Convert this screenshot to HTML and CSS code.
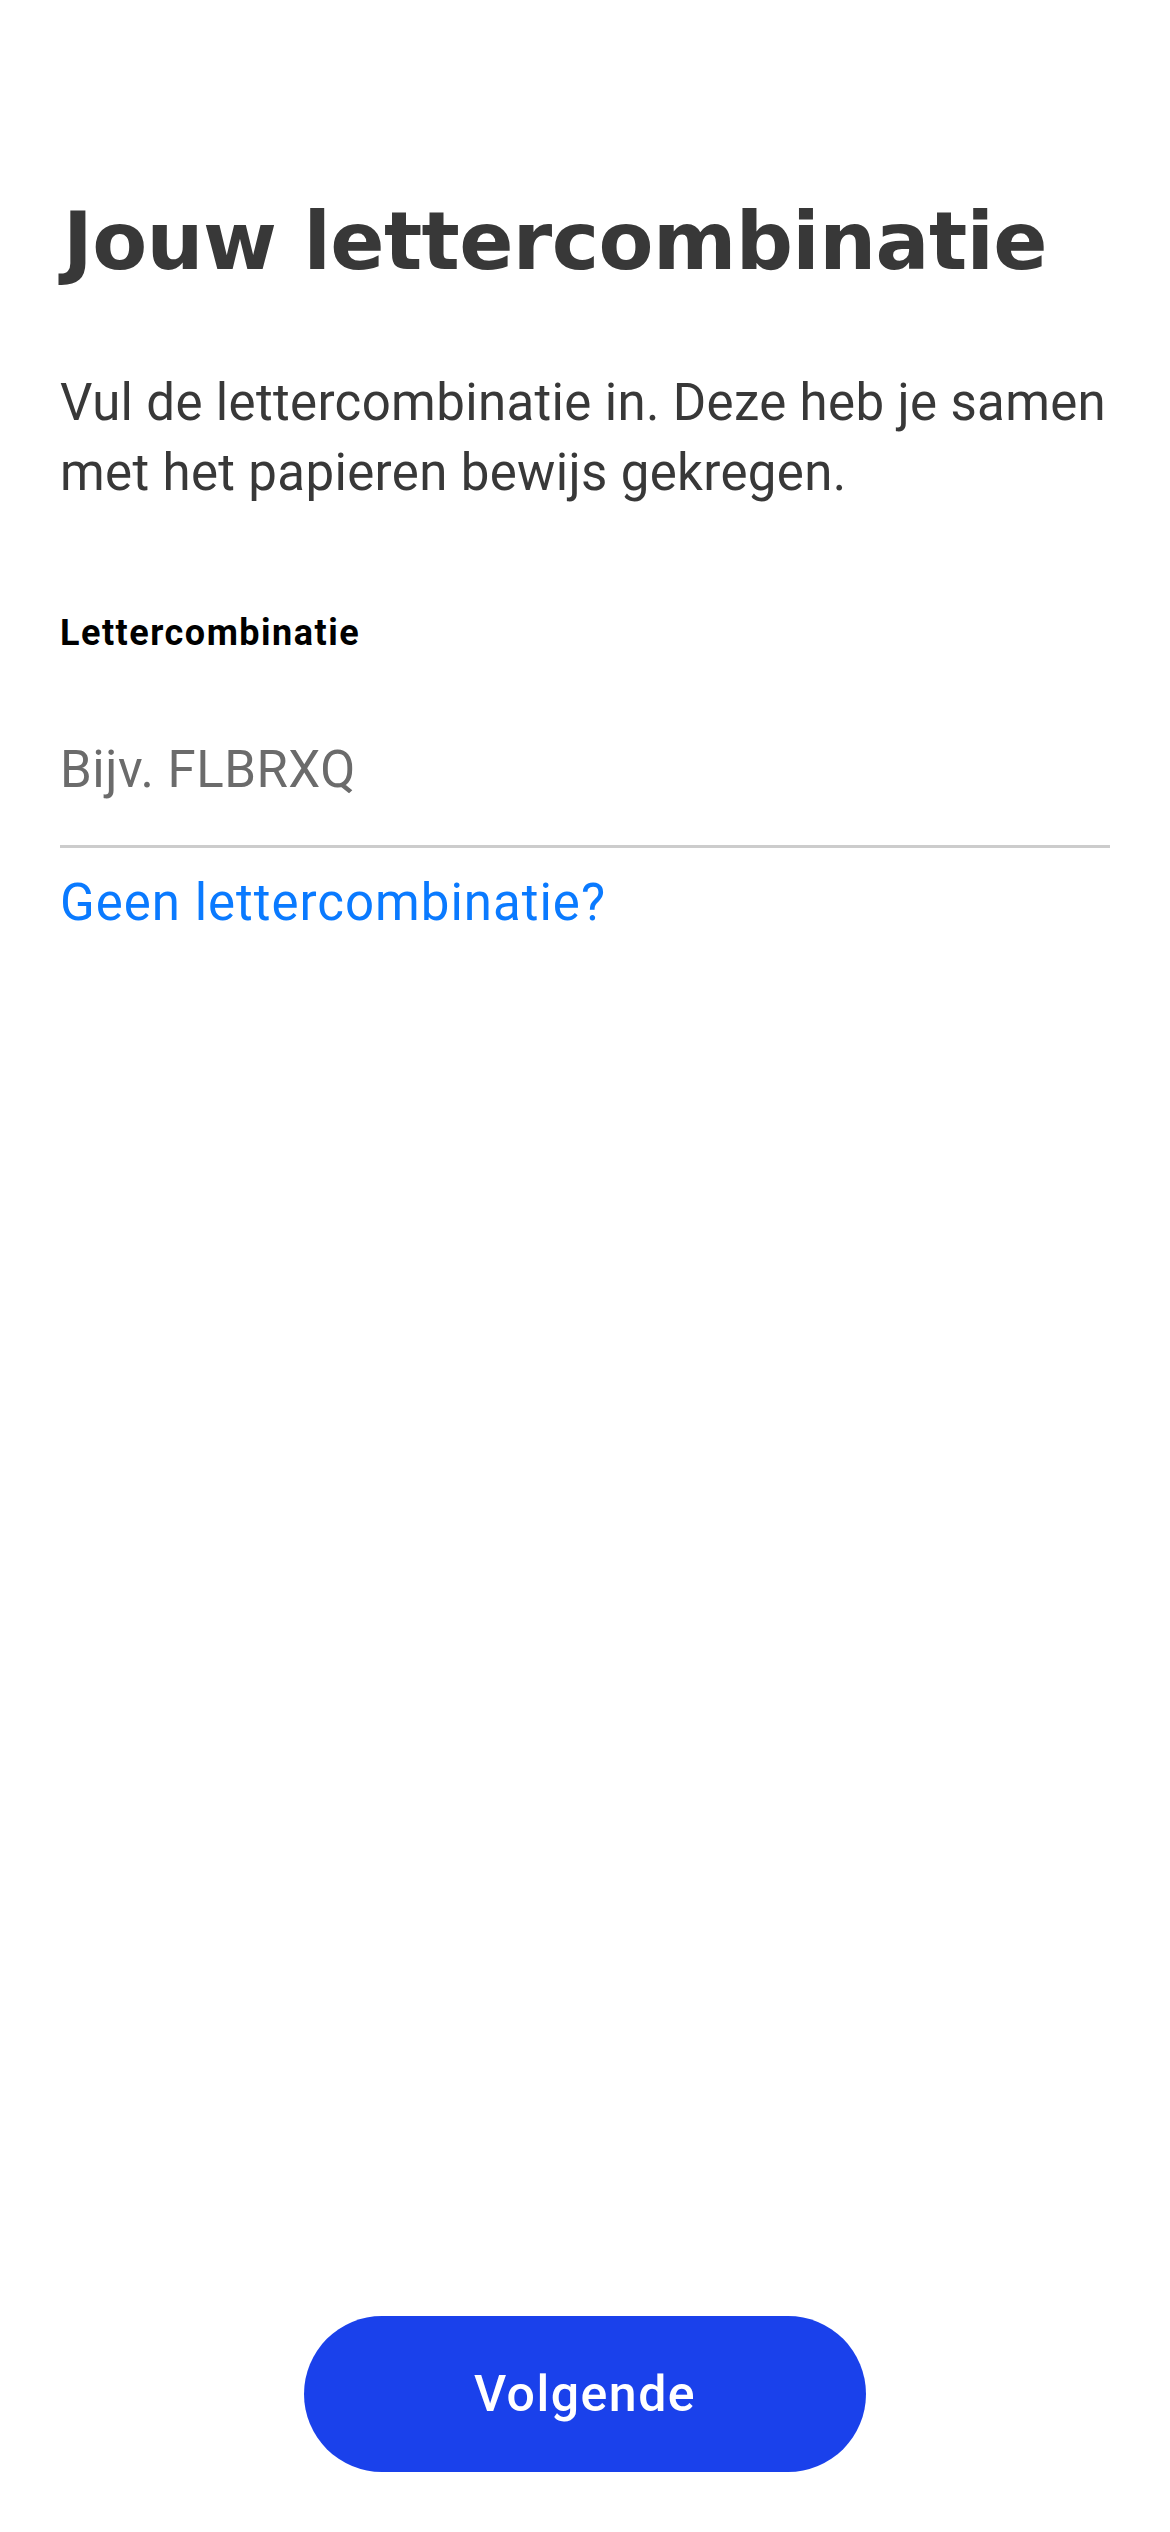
FILE: index.html
```html
<!DOCTYPE html>
<html lang="nl">
<head>
<meta charset="utf-8">
<title>Jouw lettercombinatie</title>
<link rel="stylesheet" href="styles.css">
</head>
<body>
<main class="screen">
  <h1 class="title">Jouw lettercombinatie</h1>
  <p class="intro">Vul de lettercombinatie in. Deze heb je samen met het papieren bewijs gekregen.</p>
  <label class="field-label" for="code">Lettercombinatie</label>
  <div class="field">
    <input id="code" class="field-input" type="text" placeholder="Bijv. FLBRXQ">
  </div>
  <a class="help-link" href="#">Geen lettercombinatie?</a>
  <div class="actions">
    <button class="primary-btn" type="button">Volgende</button>
  </div>
</main>
</body>
</html>
```
FILE: styles.css
```css
html, body {
  margin: 0;
  padding: 0;
  background: #ffffff;
}

.screen {
  box-sizing: border-box;
  height: 2532px;
  padding: 0 60px 60px;
  display: flex;
  flex-direction: column;
  font-family: Roboto, "Liberation Sans", sans-serif;
}

.title {
  margin: 192px 0 0;
  padding-left: 3px;
  font-family: "DejaVu Sans", sans-serif;
  font-weight: 700;
  font-size: 80px;
  line-height: 100px;
  color: #383838;
  letter-spacing: -0.6px;
}

.intro {
  margin: 76px 0 0;
  font-size: 51px;
  line-height: 70px;
  color: #383838;
  letter-spacing: 0.35px;
}

.field-label {
  margin-top: 103px;
  font-size: 36px;
  font-weight: 700;
  line-height: 44px;
  color: #000000;
  letter-spacing: 1.5px;
}

.field {
  margin-top: 84px;
  border-bottom: 3px solid #cccccc;
  padding-bottom: 44px;
}

.field-input {
  display: block;
  width: 100%;
  border: 0;
  padding: 0;
  margin: 0;
  outline: none;
  font-family: Roboto, "Liberation Sans", sans-serif;
  font-size: 51px;
  line-height: 62px;
  color: #383838;
  letter-spacing: 0.5px;
  background: transparent;
}

.field-input::placeholder {
  color: #6b6b6b;
  opacity: 1;
}

.help-link {
  margin-top: 24px;
  align-self: flex-start;
  font-size: 51px;
  line-height: 62px;
  color: #0a7aff;
  letter-spacing: 1px;
  text-decoration: none;
}

.actions {
  margin-top: auto;
  display: flex;
  justify-content: center;
}

.primary-btn {
  width: 562px;
  height: 156px;
  border: 0;
  border-radius: 78px;
  background: #1a41eb;
  color: #ffffff;
  font-family: Roboto, "Liberation Sans", sans-serif;
  font-size: 50px;
  font-weight: 500;
  letter-spacing: 1.5px;
  cursor: pointer;
}
```
